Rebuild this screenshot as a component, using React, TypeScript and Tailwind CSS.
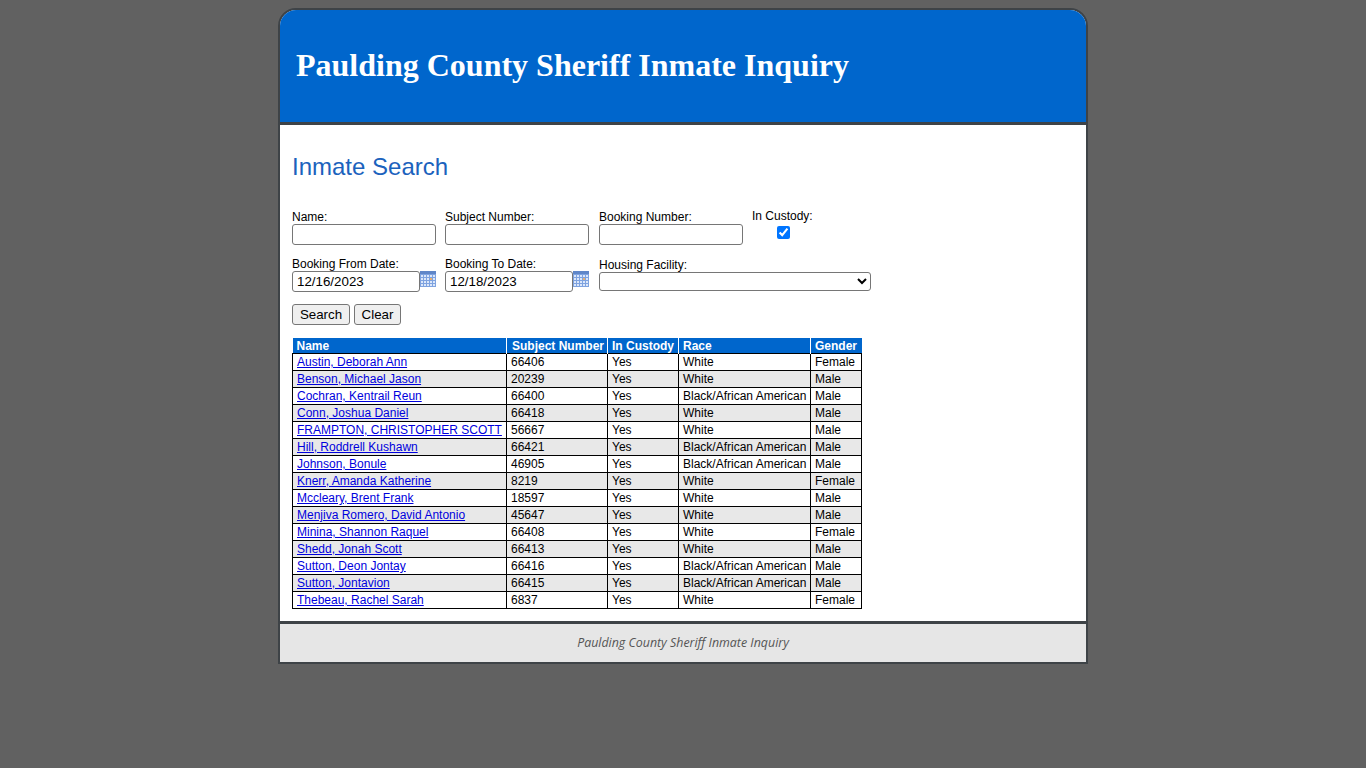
import { Fragment } from 'react';

const rows = [
  ['Austin, Deborah Ann', '66406', 'White', 'Female'],
  ['Benson, Michael Jason', '20239', 'White', 'Male'],
  ['Cochran, Kentrail Reun', '66400', 'Black/African American', 'Male'],
  ['Conn, Joshua Daniel', '66418', 'White', 'Male'],
  ['FRAMPTON, CHRISTOPHER SCOTT', '56667', 'White', 'Male'],
  ['Hill, Roddrell Kushawn', '66421', 'Black/African American', 'Male'],
  ['Johnson, Bonule', '46905', 'Black/African American', 'Male'],
  ['Knerr, Amanda Katherine', '8219', 'White', 'Female'],
  ['Mccleary, Brent Frank', '18597', 'White', 'Male'],
  ['Menjiva Romero, David Antonio', '45647', 'White', 'Male'],
  ['Minina, Shannon Raquel', '66408', 'White', 'Female'],
  ['Shedd, Jonah Scott', '66413', 'White', 'Male'],
  ['Sutton, Deon Jontay', '66416', 'Black/African American', 'Male'],
  ['Sutton, Jontavion', '66415', 'Black/African American', 'Male'],
  ['Thebeau, Rachel Sarah', '6837', 'White', 'Female'],
];

const inputClass =
  'block h-[21px] border border-[#767676] rounded-[3px] bg-white px-1 text-[13.33px] text-black';

function CalendarIcon() {
  return (
    <svg width="16" height="16" viewBox="0 0 16 16" className="block">
      <rect x="0" y="0" width="16" height="16" fill="#7fa3e0" />
      <rect x="0" y="0" width="16" height="3" fill="#5f86c8" />
      {[4, 7, 10, 13].map(y => (
        <Fragment key={y}>
          {[1, 4, 7, 10, 13].map(x => (
            <rect
              key={x}
              x={x}
              y={y}
              width="2"
              height="2"
              fill={x === 10 && y === 7 ? '#e8b070' : '#dbe7fa'}
            />
          ))}
        </Fragment>
      ))}
    </svg>
  );
}

export default function App() {
  return (
    <div className="min-h-[768px] bg-[#616161] pt-2 font-['Liberation_Sans',Arial,sans-serif] text-black">
      <div className="mx-auto w-[810px] rounded-t-[18px] border-2 border-[#3e4347] bg-white">
        <div className="flex h-[112px] items-center rounded-t-[16px] bg-[#0066cc] pb-[2px] pl-4">
          <h1 className="font-['Liberation_Serif',serif] text-[32px] font-bold leading-none text-white">
            Paulding County Sheriff Inmate Inquiry
          </h1>
        </div>
        <div className="h-[3px] bg-[#3e4347]" />

        <div className="h-[496px] px-3 pt-[28px]">
          <h2 className="text-[24px] leading-[28px] text-[#1b62bd]">Inmate Search</h2>

          <div className="mt-[29px] flex">
            <div className="w-[153px]">
              <label className="block text-[12px] leading-[14px]">Name:</label>
              <input type="text" className={`${inputClass} w-[144px]`} />
            </div>
            <div className="w-[154px]">
              <label className="block text-[12px] leading-[14px]">Subject Number:</label>
              <input type="text" className={`${inputClass} w-[144px]`} />
            </div>
            <div className="w-[153px]">
              <label className="block text-[12px] leading-[14px]">Booking Number:</label>
              <input type="text" className={`${inputClass} w-[144px]`} />
            </div>
            <div className="-mt-px">
              <label className="block text-[12px] leading-[14px]">In Custody:</label>
              <input type="checkbox" defaultChecked className="mt-[3px] ml-[25px] block h-[13px] w-[13px]" />
            </div>
          </div>

          <div className="mt-[12px] flex">
            <div className="w-[153px]">
              <label className="block text-[12px] leading-[14px]">Booking From Date:</label>
              <div className="flex items-start">
                <input type="text" defaultValue="12/16/2023" className={`${inputClass} w-[128px]`} />
                <CalendarIcon />
              </div>
            </div>
            <div className="w-[154px]">
              <label className="block text-[12px] leading-[14px]">Booking To Date:</label>
              <div className="flex items-start">
                <input type="text" defaultValue="12/18/2023" className={`${inputClass} w-[128px]`} />
                <CalendarIcon />
              </div>
            </div>
            <div className="mt-px">
              <label className="block text-[12px] leading-[14px]">Housing Facility:</label>
              <select className="block h-[19px] w-[272px] rounded-[3px] border border-[#767676] bg-white text-[13.33px]">
                <option></option>
              </select>
            </div>
          </div>

          <div className="mt-[12px] flex gap-1">
            <button className="h-[21px] w-[58px] rounded-[3px] border border-[#767676] bg-[#efefef] text-[13.33px]">
              Search
            </button>
            <button className="h-[21px] w-[47px] rounded-[3px] border border-[#767676] bg-[#efefef] text-[13.33px]">
              Clear
            </button>
          </div>

          <table className="mt-[13px] w-[569px] table-fixed border-collapse text-[12px] leading-[14px]">
            <colgroup>
              <col className="w-[214px]" />
              <col className="w-[101px]" />
              <col className="w-[71px]" />
              <col className="w-[132px]" />
              <col className="w-[51px]" />
            </colgroup>
            <thead>
              <tr className="bg-[#0066cc] text-left font-bold text-white">
                <th className="h-[15px] pb-0 pl-[4px] pt-px">Name</th>
                <th className="border-l border-white pb-0 pl-[5px] pt-px">Subject Number</th>
                <th className="border-l border-white pb-0 pl-[4px] pt-px">In Custody</th>
                <th className="border-l border-white pb-0 pl-[4px] pt-px">Race</th>
                <th className="border-l border-white pb-0 pl-[4px] pt-px">Gender</th>
              </tr>
            </thead>
            <tbody>
              {rows.map((row, i) => (
                <tr key={row[0]} className={i % 2 === 1 ? 'bg-[#e8e8e8]' : 'bg-white'}>
                  <td className="h-[17px] overflow-visible whitespace-nowrap border border-black py-0 pl-1">
                    <a href="#" className="text-[#0000dd] underline">
                      {row[0]}
                    </a>
                  </td>
                  <td className="border border-black py-0 pl-1">{row[1]}</td>
                  <td className="border border-black py-0 pl-1">Yes</td>
                  <td className="whitespace-nowrap border border-black py-0 pl-1">{row[2]}</td>
                  <td className="border border-black py-0 pl-1">{row[3]}</td>
                </tr>
              ))}
            </tbody>
          </table>
        </div>

        <div className="flex h-[41px] items-center justify-center border-t-[3px] border-[#3e4347] bg-[#e6e6e6] font-['Open_Sans',sans-serif] text-[12.4px] italic text-[#555]">
          Paulding County Sheriff Inmate Inquiry
        </div>
      </div>
    </div>
  );
}
